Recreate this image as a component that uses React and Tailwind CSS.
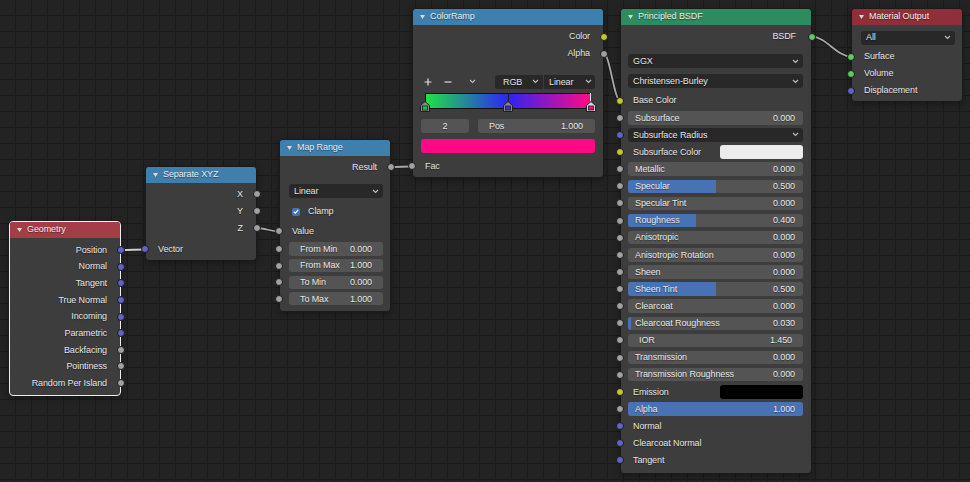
import React from 'react';

const SOCK = {
  vec: 'bg-[#6363c7]',
  float: 'bg-[#a1a1a1]',
  color: 'bg-[#c7c729]',
  shader: 'bg-[#63c763]',
};

const Socket = ({ type, side }) => (
  <span
    className={`absolute top-1/2 -translate-y-1/2 w-[8px] h-[8px] rounded-full border border-[#1a1a1a] ${SOCK[type]} ${
      side === 'left' ? '-left-[5px]' : '-right-[5px]'
    }`}
  />
);

const Chevron = () => (
  <svg width="7" height="5" viewBox="0 0 7 5">
    <path d="M1 1l2.5 2.5L6 1" stroke="#bdbdbd" strokeWidth="1.1" fill="none" />
  </svg>
);

const Node = ({ pos, head, title, selected, children }) => (
  <div
    className={`absolute flex flex-col rounded-[4px] border bg-[#3d3d3d] shadow-[0_2px_6px_rgba(0,0,0,0.35)] ${
      selected ? 'border-[#ededed]' : 'border-[#1a1a1a]'
    } ${pos}`}
  >
    <div className={`h-[16px] shrink-0 rounded-t-[3px] flex items-center pl-[7px] text-[#ececec] ${head}`}>
      <svg width="5" height="4" viewBox="0 0 5 4" className="mr-[5px]">
        <path d="M0 0h5L2.5 4z" fill="#d8d8d8" />
      </svg>
      <span>{title}</span>
    </div>
    {children}
  </div>
);

const Out = ({ label, type, h = 'h-[17px]', pr = 'pr-[13px]' }) => (
  <div className={`relative flex items-center justify-end ${h} ${pr}`}>
    <span className="pt-[1px]">{label}</span>
    <Socket type={type} side="right" />
  </div>
);

const In = ({ label, type, h = 'h-[17px]', children }) => (
  <div className={`relative flex items-center pl-[12px] ${h}`}>
    <Socket type={type} side="left" />
    <span className="flex-1 pt-[1px]">{label}</span>
    {children}
  </div>
);

const Drop = ({ label, cls }) => (
  <div className={`shrink-0 h-[14px] rounded-[3px] bg-[#282828] flex items-center justify-between pl-[5px] pr-[4px] ${cls}`}>
    <span className="pt-[1px]">{label}</span>
    <Chevron />
  </div>
);

const Slider = ({
  label,
  value,
  fill = 0,
  type = 'float',
  row = 'h-[17.14px]',
  box = 'h-[13.5px]',
  m = 'ml-[7px] mr-[8px]',
  px = 'pl-[7px] pr-[8px]',
}) => (
  <div className={`relative flex items-center ${row}`}>
    <Socket type={type} side="left" />
    <div className={`relative flex-1 overflow-hidden rounded-[3px] bg-[#545454] flex items-center justify-between pt-[1px] text-[#e8e8e8] ${box} ${m} ${px}`}>
      {fill > 0 && <div className="absolute inset-y-0 left-0 bg-[#4772b3]" style={{ width: `${fill * 100}%` }} />}
      <span className="relative">{label}</span>
      <span className="relative">{value}</span>
    </div>
  </div>
);

const Stop = ({ color, active, cls }) => (
  <svg width="10" height="11" viewBox="0 0 10 11" className={`absolute -translate-x-1/2 top-[8px] ${cls}`}>
    <path d="M0.5 10.5V4.5L5 0.5l4.5 4V10.5z" fill={active ? '#d9d9d9' : '#8a8a8a'} stroke="#1e1e1e" strokeWidth="1" />
    <rect x="2.5" y="5" width="5" height="4" fill={color} stroke="#1e1e1e" strokeWidth="0.8" />
  </svg>
);

const geometry = [
  ['Position', 'vec'],
  ['Normal', 'vec'],
  ['Tangent', 'vec'],
  ['True Normal', 'vec'],
  ['Incoming', 'vec'],
  ['Parametric', 'vec'],
  ['Backfacing', 'float'],
  ['Pointiness', 'float'],
  ['Random Per Island', 'float'],
];

const mapRange = [
  ['From Min', '0.000'],
  ['From Max', '1.000'],
  ['To Min', '0.000'],
  ['To Max', '1.000'],
];

const wires = [
  [121, 250, 145, 249.5, '#d2d2d2'],
  [257, 228, 279, 231.5, '#a9a9a9'],
  [391, 167, 412, 166.5, '#a9a9a9'],
  [604, 53.7, 620, 100.7, '#a9a9a9'],
  [812, 36.7, 851, 56.7, '#a9a9a9'],
];

const Wires = () => (
  <svg className="absolute inset-0" width="970" height="482">
    {wires.map(([x1, y1, x2, y2, c], i) => {
      const d = Math.abs(x2 - x1) * 0.35;
      const p = `M${x1} ${y1}C${x1 + d} ${y1} ${x2 - d} ${y2} ${x2} ${y2}`;
      return (
        <g key={i}>
          <path d={p} stroke="#161616" strokeWidth="3.6" fill="none" strokeOpacity="0.8" />
          <path d={p} stroke={c} strokeWidth="1.8" fill="none" />
        </g>
      );
    })}
  </svg>
);

export default function App() {
  return (
    <div className="relative w-[970px] h-[482px] overflow-hidden bg-[#232323] bg-[linear-gradient(to_right,#1a1a1a_1px,transparent_1px),linear-gradient(to_bottom,#1a1a1a_1px,transparent_1px)] bg-[length:16px_16px] bg-[position:15px_15px] font-['Liberation_Sans',Arial,sans-serif] text-[9px] tracking-[-0.1px] text-[#e4e4e4] [text-shadow:0_1px_1px_rgba(0,0,0,0.45)]">
      <Wires />

      {/* Geometry */}
      <Node pos="left-[9px] top-[221px] w-[112px] h-[175px]" head="bg-[#a53d46]" title="Geometry" selected>
        <div className="pt-[3.7px] flex flex-col">
          {geometry.map(([l, t]) => (
            <Out key={l} label={l} type={t} h="h-[16.63px]" />
          ))}
        </div>
      </Node>

      {/* Separate XYZ */}
      <Node pos="left-[145px] top-[166px] w-[112px] h-[95px]" head="bg-[#3f7fae]" title="Separate XYZ">
        <div className="pt-[2.5px] flex flex-col">
          <Out label="X" type="float" />
          <Out label="Y" type="float" />
          <Out label="Z" type="float" />
          <div className="mt-[4px]">
            <In label="Vector" type="vec" />
          </div>
        </div>
      </Node>

      {/* Map Range */}
      <Node pos="left-[279px] top-[139px] w-[112px] h-[173px]" head="bg-[#3f7fae]" title="Map Range">
        <div className="pt-[2.5px] flex flex-col">
          <Out label="Result" type="float" />
          <Drop label="Linear" cls="mt-[8.8px] ml-[9px] mr-[7px]" />
          <div className="mt-[5.4px] h-[16px] flex items-center pl-[12px]">
            <span className="w-[8px] h-[8px] rounded-[2px] bg-[#4772b3] flex items-center justify-center mr-[8px]">
              <svg width="6" height="5" viewBox="0 0 6 5">
                <path d="M0.7 2.6l1.6 1.6L5.3 0.9" stroke="#fff" strokeWidth="1.1" fill="none" />
              </svg>
            </span>
            <span className="pt-[1px]">Clamp</span>
          </div>
          <div className="mt-[3.3px]">
            <In label="Value" type="float" />
          </div>
          <div className="mt-[0.7px] flex flex-col">
            {mapRange.map(([l, v]) => (
              <Slider key={l} label={l} value={v} row="h-[16.6px]" box="h-[13.3px]" m="ml-[9px] mr-[7px]" px="pl-[11px] pr-[11px]" />
            ))}
          </div>
        </div>
      </Node>

      {/* ColorRamp */}
      <Node pos="left-[412px] top-[8px] w-[192px] h-[170px]" head="bg-[#3f7fae]" title="ColorRamp">
        <div className="pt-[3.2px] flex flex-col">
          <Out label="Color" type="color" />
          <Out label="Alpha" type="float" />
          <div className="mt-[12.8px] h-[14px] flex items-center">
            <span className="ml-[8px] w-[14px] flex justify-center">
              <svg width="8" height="8" viewBox="0 0 8 8">
                <path d="M4 0.5v7M0.5 4h7" stroke="#dedede" strokeWidth="1.2" />
              </svg>
            </span>
            <span className="ml-[6px] w-[14px] flex justify-center">
              <svg width="8" height="8" viewBox="0 0 8 8">
                <path d="M0.5 4h7" stroke="#dedede" strokeWidth="1.2" />
              </svg>
            </span>
            <span className="ml-[10px] w-[14px] flex justify-center">
              <Chevron />
            </span>
            <div className="ml-[16px] w-[100px] h-[14px] flex rounded-[3px] bg-[#282828]">
              <div className="w-[49px] flex items-center justify-between pl-[8px] pr-[4px] border-r border-[#3a3a3a]">
                <span className="pt-[1px]">RGB</span>
                <Chevron />
              </div>
              <div className="flex-1 flex items-center justify-between pl-[5px] pr-[3px]">
                <span className="pt-[1px]">Linear</span>
                <Chevron />
              </div>
            </div>
          </div>
          <div className="mt-[4.3px] ml-[12px] mr-[12px] relative h-[16px]">
            <div className="absolute inset-0 border border-[#111] bg-[linear-gradient(to_right,#1fe244,#2c24f6_50%,#ff0a84)]" />
            <div className="absolute top-0 bottom-0 left-1/2 w-px bg-[#222]" />
            <div className="absolute top-0 bottom-0 right-0 w-px bg-[#f2f2f2]" />
            <Stop color="#21c443" cls="left-0" />
            <Stop color="#3a2be0" cls="left-1/2" />
            <Stop color="#ff0a84" cls="left-full" active />
          </div>
          <div className="mt-[10px] h-[13.4px] flex ml-[8px] mr-[8px] gap-[9px] text-[#e8e8e8]">
            <div className="w-[48px] rounded-[3px] bg-[#545454] flex items-center justify-center pt-[1px]">2</div>
            <div className="flex-1 rounded-[3px] bg-[#545454] flex items-center justify-between pl-[11px] pr-[12px] pt-[1px]">
              <span>Pos</span>
              <span>1.000</span>
            </div>
          </div>
          <div className="mt-[6.3px] h-[13.7px] ml-[8px] mr-[8px] rounded-[3px] bg-[#ff0a84]" />
          <div className="mt-[5px]">
            <In label="Fac" type="float" />
          </div>
        </div>
      </Node>

      {/* Principled BSDF */}
      <Node pos="left-[620px] top-[8px] w-[192px] h-[466px]" head="bg-[#2e8a5f]" title="Principled BSDF">
        <div className="pt-[3.2px] flex flex-col">
          <Out label="BSDF" type="shader" pr="pr-[15px]" />
          <Drop label="GGX" cls="mt-[9.1px] ml-[7px] mr-[8px]" />
          <Drop label="Christensen-Burley" cls="mt-[6px] ml-[7px] mr-[8px]" />
          <div className="mt-[3.8px] flex flex-col">
            <In label="Base Color" type="color" h="h-[17.14px]" />
            <Slider label="Subsurface" value="0.000" />
            <div className="relative h-[17.14px] flex items-center">
              <Socket type="vec" side="left" />
              <Drop label="Subsurface Radius" cls="flex-1 ml-[7px] mr-[8px]" />
            </div>
            <In label="Subsurface Color" type="color" h="h-[17.14px]">
              <span className="w-[83px] h-[13.7px] mr-[8px] rounded-[3px] bg-[#ececec]" />
            </In>
            <Slider label="Metallic" value="0.000" />
            <Slider label="Specular" value="0.500" fill={0.5} />
            <Slider label="Specular Tint" value="0.000" />
            <Slider label="Roughness" value="0.400" fill={0.39} />
            <Slider label="Anisotropic" value="0.000" />
            <Slider label="Anisotropic Rotation" value="0.000" />
            <Slider label="Sheen" value="0.000" />
            <Slider label="Sheen Tint" value="0.500" fill={0.5} />
            <Slider label="Clearcoat" value="0.000" />
            <Slider label="Clearcoat Roughness" value="0.030" fill={0.017} />
            <Slider label="IOR" value="1.450" px="pl-[11px] pr-[11px]" />
            <Slider label="Transmission" value="0.000" />
            <Slider label="Transmission Roughness" value="0.000" />
            <In label="Emission" type="color" h="h-[17.14px]">
              <span className="w-[83px] h-[13.7px] mr-[8px] rounded-[3px] bg-black" />
            </In>
            <Slider label="Alpha" value="1.000" fill={1} />
            <In label="Normal" type="vec" h="h-[17.14px]" />
            <In label="Clearcoat Normal" type="vec" h="h-[17.14px]" />
            <In label="Tangent" type="vec" h="h-[17.14px]" />
          </div>
        </div>
      </Node>

      {/* Material Output */}
      <Node pos="left-[851px] top-[8px] w-[112px] h-[94px]" head="bg-[#8f2f39]" title="Material Output">
        <div className="flex flex-col">
          <Drop label="All" cls="mt-[5.5px] ml-[9px] mr-[7px]" />
          <div className="mt-[3.7px] flex flex-col">
            <In label="Surface" type="shader" />
            <In label="Volume" type="shader" />
            <In label="Displacement" type="vec" />
          </div>
        </div>
      </Node>
    </div>
  );
}
